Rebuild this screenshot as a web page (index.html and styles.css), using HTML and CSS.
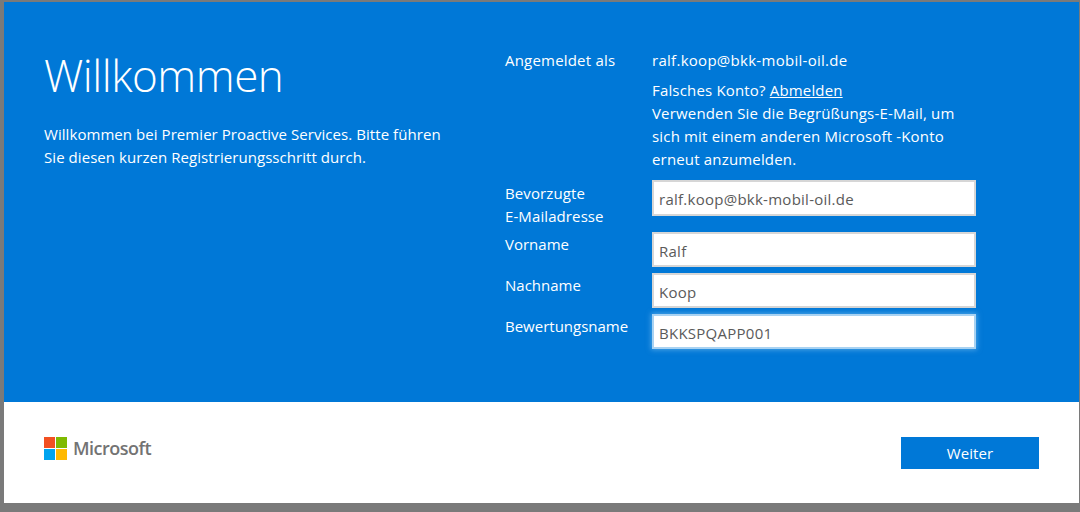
FILE: index.html
```html
<!DOCTYPE html>
<html lang="de">
<head>
<meta charset="utf-8">
<title>Willkommen</title>
<link rel="stylesheet" href="styles.css">
</head>
<body>
<div class="dialog">
  <main class="hero">
    <section class="intro">
      <h1 class="title">Willkommen</h1>
      <p class="lead">Willkommen bei Premier Proactive Services. Bitte führen Sie diesen kurzen Registrierungsschritt durch.</p>
    </section>
    <section class="form">
      <div class="row signed">
        <div class="label plain">Angemeldet als</div>
        <div class="account">
          <div class="email">ralf.koop@bkk-mobil-oil.de</div>
          <div class="hint">Falsches Konto? <a class="link" href="#">Abmelden</a><br>Verwenden Sie die Begrüßungs-E-Mail, um sich mit einem anderen Microsoft -Konto erneut anzumelden.</div>
        </div>
      </div>
      <div class="row first"><label class="label tall">Bevorzugte<br>E-Mailadresse</label><input class="field big" value="ralf.koop@bkk-mobil-oil.de"></div>
      <div class="row"><label class="label">Vorname</label><input class="field" value="Ralf"></div>
      <div class="row"><label class="label">Nachname</label><input class="field" value="Koop"></div>
      <div class="row"><label class="label">Bewertungsname</label><input class="field focus" value="BKKSPQAPP001"></div>
    </section>
  </main>
  <footer class="foot">
    <div class="brand">
      <svg class="logo" width="23" height="23" viewBox="0 0 23 23" aria-hidden="true">
        <rect width="11" height="11" fill="#f25022"/>
        <rect x="12" width="11" height="11" fill="#7fba00"/>
        <rect y="12" width="11" height="11" fill="#00a4ef"/>
        <rect x="12" y="12" width="11" height="11" fill="#ffb900"/>
      </svg>
      <span class="wordmark">Microsoft</span>
    </div>
    <button class="next">Weiter</button>
  </footer>
</div>
</body>
</html>
```
FILE: styles.css
```css
* { box-sizing: border-box; }
html, body { margin: 0; height: 100%; }
body {
  background: #7a7a7a;
  padding: 2px 1px 9px 4px;
  font-family: "Open Sans", "Noto Sans", sans-serif;
  overflow: hidden;
}
.dialog { height: 501px; display: flex; flex-direction: column; }
.hero {
  height: 400px;
  background: #0078d7;
  color: #fff;
  display: flex;
  padding-left: 40px;
}
.intro { width: 461px; padding-top: 39px; }
.title {
  margin: 0;
  font-size: 44px;
  font-weight: 300;
  line-height: 68px;
  letter-spacing: -0.47px;
}
.lead {
  margin: 14px 0 0;
  width: 410px;
  font-size: 15px;
  line-height: 23px;
  letter-spacing: 0.06px;
}
.form { width: 471px; padding-top: 47px; }
.row { display: flex; margin-bottom: 6px; }
.signed { margin-bottom: 0; }
.first { margin-bottom: 4px; }
.label { width: 147px; padding-top: 1px; font-size: 15px; line-height: 23px; letter-spacing: 0; flex: none; }
.plain { padding-top: 0; letter-spacing: 0.2px; }
.tall { padding-top: 2px; letter-spacing: 0.1px; }
.account { width: 305px; font-size: 15px; line-height: 23px; letter-spacing: 0.17px; }
.email { margin-bottom: 7px; letter-spacing: 0.28px; }
.hint { height: 101px; }
.link { color: #fff; }
.field {
  width: 324px;
  height: 35px;
  margin: 0;
  padding: 2px 5px 0;
  background: #fff;
  border: 2px solid #d6d6d6;
  border-radius: 0;
  color: #5a5a5a;
  font: 15px "Open Sans", "Noto Sans", sans-serif;
  letter-spacing: 0.26px;
  outline: none;
}
.big { height: 36px; }
.focus { border-color: #a8d2f2; box-shadow: 0 0 5px 1px rgba(150, 205, 245, .5); }
.foot {
  height: 101px;
  background: #fff;
  display: flex;
  justify-content: space-between;
  padding: 35px 40px 0 40px;
}
.brand { display: flex; align-items: flex-start; gap: 6px; height: 23px; }
.wordmark {
  color: #737373;
  font-size: 18px;
  font-weight: 600;
  line-height: 23px;
  letter-spacing: -0.5px;
}
.next {
  width: 138px;
  height: 32px;
  border: 0;
  background: #0078d7;
  color: #fff;
  font: 15px "Open Sans", "Noto Sans", sans-serif;
  letter-spacing: 0.1px;
}
```
